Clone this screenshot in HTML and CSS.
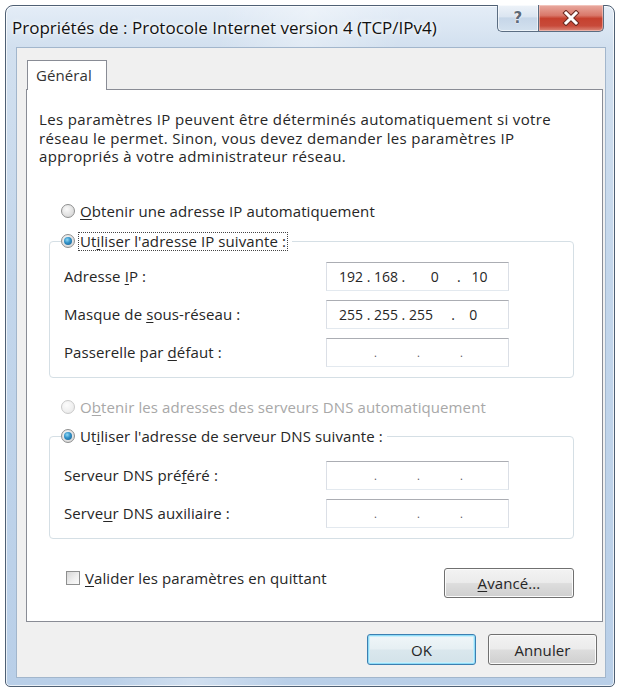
FILE: index.html
```html
<!DOCTYPE html>
<html lang="fr">
<head>
<meta charset="utf-8">
<title>Propriétés de : Protocole Internet version 4 (TCP/IPv4)</title>
<link rel="stylesheet" href="styles.css">
</head>
<body>
<div class="window">
  <div class="titlebar">
    <div class="title">Propriétés de : Protocole Internet version 4 (TCP/IPv4)</div>
    <div class="caption-buttons">
      <div class="cbtn help"><span>?</span></div>
      <div class="cbtn close">
        <svg width="20" height="16" viewBox="0 0 20 16">
          <path d="M5 3 L15 13 M15 3 L5 13" stroke="#6b2a22" stroke-width="5" stroke-linecap="square" fill="none"/>
          <path d="M5 3 L15 13 M15 3 L5 13" stroke="#ffffff" stroke-width="3" stroke-linecap="square" fill="none"/>
        </svg>
      </div>
    </div>
  </div>
  <div class="client">
    <div class="tabs"><div class="tab">Général</div></div>
    <div class="panel">
      <p class="intro">Les paramètres IP peuvent être déterminés automatiquement si votre<br>réseau le permet. Sinon, vous devez demander les paramètres IP<br>appropriés à votre administrateur réseau.</p>

      <div class="option first-option"><span class="radio"></span><span><u>O</u>btenir une adresse IP automatiquement</span></div>

      <fieldset class="group">
        <legend class="option"><span class="radio checked"></span><span class="focus">Ut<u>i</u>liser l'adresse IP suivante :</span></legend>
        <div class="row"><span class="label">Adresse <u>I</u>P :</span><span class="ipbox"><span class="iptext">192 . 168 .       0     .   10</span></span></div>
        <div class="row"><span class="label">Masque de <u>s</u>ous-réseau :</span><span class="ipbox"><span class="iptext">255 . 255 . 255     .    0</span></span></div>
        <div class="row"><span class="label">Passerelle par <u>d</u>éfaut :</span><span class="ipbox empty"><span class="dot">.</span><span class="dot">.</span><span class="dot">.</span></span></div>
      </fieldset>

      <div class="option disabled second-option"><span class="radio"></span><span>O<u>b</u>tenir les adresses des serveurs DNS automatiquement</span></div>

      <fieldset class="group group-dns">
        <legend class="option"><span class="radio checked"></span><span class="plain">Ut<u>i</u>liser l'adresse de serveur DNS suivante :</span></legend>
        <div class="row"><span class="label">Serveur DNS pré<u>f</u>éré :</span><span class="ipbox empty"><span class="dot">.</span><span class="dot">.</span><span class="dot">.</span></span></div>
        <div class="row"><span class="label">Serve<u>u</u>r DNS auxiliaire :</span><span class="ipbox empty"><span class="dot">.</span><span class="dot">.</span><span class="dot">.</span></span></div>
      </fieldset>

      <div class="bottom-row">
        <div class="check-line"><span class="checkbox"></span><span><u>V</u>alider les paramètres en quittant</span></div>
        <div class="button advanced"><u>A</u>vancé...</div>
      </div>
    </div>
    <div class="dialog-buttons">
      <div class="button default">OK</div>
      <div class="button">Annuler</div>
    </div>
  </div>
</div>
</body>
</html>
```

FILE: styles.css
```css
html, body {
  margin: 0;
  padding: 0;
  background: #ffffff;
}

body {
  font-family: "Open Sans", "Noto Sans", sans-serif;
  font-size: 15px;
  letter-spacing: 0.1px;
  color: #262626;
}

u {
  text-decoration: underline;
  text-underline-offset: 2px;
}

.window {
  width: 610px;
  height: 682px;
  margin: 5px 0 0 5px;
  box-sizing: border-box;
  border: 1px solid #4f6074;
  border-radius: 8px 8px 5px 5px;
  background:
    linear-gradient(100deg, rgba(255,255,255,0) 30%, rgba(255,255,255,0.35) 42%, rgba(255,255,255,0) 55%),
    linear-gradient(180deg, #e4edf7 0%, #d2e0ef 6%, #c3d6eb 40%, #b9cfe8 100%);
  box-shadow: inset 0 0 0 1px rgba(255,255,255,0.7);
  display: flex;
  flex-direction: column;
}

.titlebar {
  height: 41px;
  display: flex;
  justify-content: space-between;
  align-items: flex-start;
  padding-left: 6px;
  flex: none;
}

.title {
  padding-top: 11px;
  font-size: 17px;
  line-height: 22px;
  letter-spacing: 0;
  color: #111111;
  text-shadow: 0 0 6px #ffffff, 0 0 3px #ffffff;
}

.caption-buttons {
  display: flex;
  margin-right: 10px;
  margin-top: -1px;
}

.cbtn {
  height: 27px;
  box-sizing: border-box;
  border: 1px solid #5b6d82;
  border-top: none;
  display: flex;
  align-items: center;
  justify-content: center;
}

.help {
  width: 41px;
  border-radius: 0 0 0 5px;
  border-right: none;
  background: linear-gradient(180deg, #eef3f9 0%, #dbe5f1 45%, #c6d6e8 50%, #d3e1ef 100%);
  box-shadow: inset 0 0 0 1px rgba(255,255,255,0.6);
}

.help span {
  font-family: "DejaVu Sans", sans-serif;
  font-size: 15px;
  font-weight: bold;
  color: #5e6a78;
  text-shadow: 0 0 2px #ffffff, 0 0 1px #ffffff;
  margin-top: -1px;
}

.close {
  width: 66px;
  border-radius: 0 0 5px 0;
  background: linear-gradient(180deg, #e9aaa0 0%, #d9786a 40%, #c6412f 52%, #c84a3a 80%, #dc8a7c 100%);
  box-shadow: inset 0 0 0 1px rgba(255,230,225,0.45);
}

.close svg {
  display: block;
}

.client {
  flex: 1;
  margin: 0 8px 8px 10px;
  border: 1px solid #a2b6cc;
  background: #f0f0f0;
  padding: 12px 2px 12px 9px;
  display: flex;
  flex-direction: column;
}

.tabs {
  display: flex;
  padding-left: 1px;
  position: relative;
  z-index: 1;
  margin-bottom: -1px;
}

.tab {
  width: 80px;
  height: 30px;
  box-sizing: border-box;
  border: 1px solid #898c95;
  border-bottom: none;
  background: #ffffff;
  padding-left: 8px;
  line-height: 28px;
  color: #333333;
}

.panel {
  flex: 1;
  border: 1px solid #898c95;
  background: #ffffff;
  padding: 20px 28px 0 22px;
}

.intro {
  margin: 0 0 0 -10px;
  line-height: 18.5px;
  letter-spacing: 0.35px;
  white-space: nowrap;
}

.option {
  display: flex;
  align-items: center;
  height: 19px;
  line-height: 19px;
}

.first-option {
  margin-top: 36px;
  margin-left: 12px;
}

.second-option {
  margin-top: 20px;
  margin-left: 12px;
}

.option.disabled {
  color: #a8a8a8;
}

.radio {
  width: 14px;
  height: 14px;
  box-sizing: border-box;
  border-radius: 50%;
  border: 1px solid #8e8f8f;
  background: radial-gradient(circle at 40% 35%, #fafafa 0%, #e6e6e6 45%, #cfcfcf 100%);
  margin-right: 5px;
  flex: none;
  display: flex;
  align-items: center;
  justify-content: center;
}

.disabled .radio {
  border-color: #c9c9c9;
  background: radial-gradient(circle at 40% 35%, #fcfcfc 0%, #efefef 60%, #e3e3e3 100%);
}

.radio.checked::after {
  content: "";
  width: 8px;
  height: 8px;
  border-radius: 50%;
  background: radial-gradient(circle at 40% 35%, #8fd9f5 0%, #2f8fc6 45%, #1b5c8a 100%);
}

.focus {
  border: 1px dotted #444444;
  padding: 0 1px;
  margin-left: -2px;
  line-height: 17px;
}

.group {
  margin: 11px 0 0 0;
  padding: 0 0 10px 14px;
  border: 1px solid #d5dfe5;
  border-radius: 4px;
  min-width: 0;
}

.group legend {
  margin-left: -3px;
  padding: 0 4px 0 0;
}

.group-dns {
  margin-top: 10px;
}

.row {
  display: grid;
  grid-template-columns: 262px 183px;
  align-items: center;
  margin-top: 9px;
  height: 29px;
}

.group legend + .row {
  margin-top: 11px;
}

.group-dns legend + .row {
  margin-top: 15px;
}

.ipbox {
  height: 29px;
  box-sizing: border-box;
  border: 1px solid #dbdfe6;
  border-top-color: #abadb3;
  border-bottom-color: #e3e9ef;
  background: #ffffff;
  display: flex;
  align-items: center;
  padding-left: 12px;
  font-size: 14px;
  letter-spacing: 0;
}

.iptext {
  white-space: pre;
}

.ipbox.empty {
  padding-left: 47px;
}

.ipbox.empty .dot {
  width: 43px;
  font-size: 11px;
  color: #555555;
}

.bottom-row {
  display: flex;
  align-items: flex-start;
  justify-content: space-between;
  margin-top: 30px;
}

.check-line {
  display: flex;
  align-items: center;
  margin-left: 17px;
  height: 19px;
  line-height: 19px;
  margin-top: 0;
}

.checkbox {
  width: 14px;
  height: 14px;
  box-sizing: border-box;
  border: 1px solid #8e8f8f;
  background: linear-gradient(135deg, #d6d6d6 0%, #f0f0f0 60%, #fafafa 100%);
  margin-right: 5px;
}

.button {
  height: 30px;
  box-sizing: border-box;
  border: 1px solid #707070;
  border-radius: 3px;
  background: linear-gradient(180deg, #f3f3f3 0%, #ebebeb 48%, #dddddd 52%, #cfcfcf 100%);
  box-shadow: inset 0 0 0 1px #fbfbfb;
  display: flex;
  align-items: center;
  justify-content: center;
}

.advanced {
  width: 130px;
  margin-top: -1px;
}

.dialog-buttons {
  display: flex;
  justify-content: flex-end;
  gap: 12px;
  margin-top: 12px;
  padding-right: 6px;
}

.dialog-buttons .button {
  width: 109px;
  height: 31px;
}

.button.default {
  border-color: #3c7fb1;
  background: linear-gradient(180deg, #f0f6f9 0%, #e6eff3 48%, #dae7ed 52%, #d3e2e9 100%);
  box-shadow: inset 0 0 0 1px #8fdcf7, inset 0 0 0 2px #c9eefb;
}
```
